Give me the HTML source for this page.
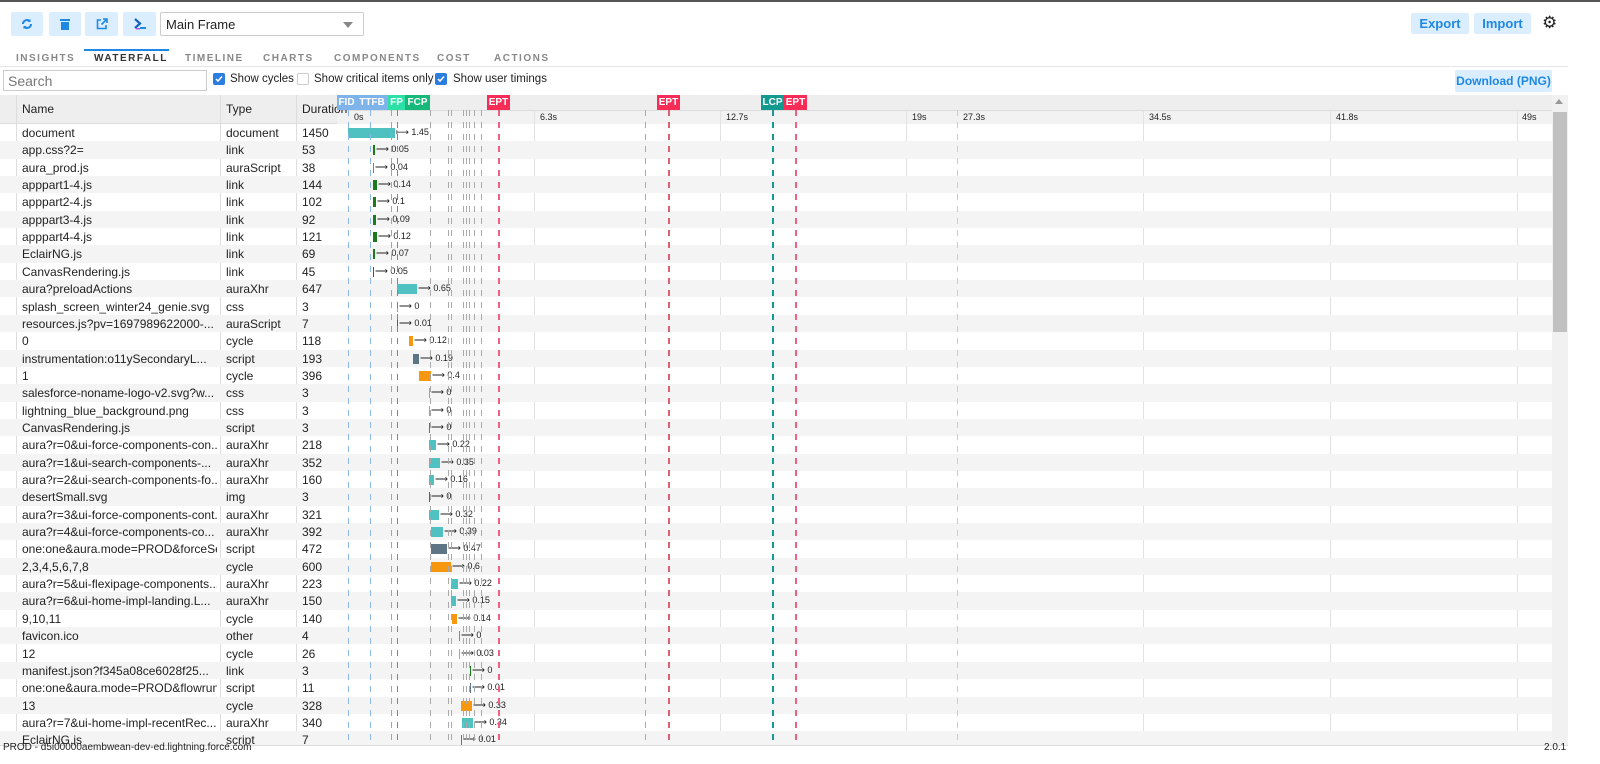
<!DOCTYPE html><html><head><meta charset="utf-8"><style>
*{box-sizing:border-box;margin:0;padding:0}
body{width:1600px;height:764px;overflow:hidden;background:#fff;font-family:"Liberation Sans",Arial,sans-serif;font-size:12px;color:#222;position:relative}
.a{position:absolute}
.btn{position:absolute;top:12px;height:24px;background:#dbeeff;border-radius:2px;display:flex;align-items:center;justify-content:center;color:#1e88e5}
.tab{position:absolute;top:53px;font-size:10px;letter-spacing:1.5px;color:#888;font-weight:bold}
.row{position:absolute;left:0;width:1552px;height:17.35px}
.row.o{background:#f4f4f4}
.c{position:absolute;top:2px;white-space:nowrap;overflow:hidden}
.n{left:22px;width:195px}.t{left:226px}.d{left:302px}
.b{position:absolute;top:4px;height:10px}
.l{position:absolute;top:3px;font-size:9px;white-space:nowrap}
.dl{position:absolute;top:110px;height:635px;width:1px}
.mk{position:absolute;top:95px;height:15px;color:#fff;font-weight:bold;font-size:10px;text-align:center;line-height:15px}
.ax{position:absolute;top:112px;font-size:9px}
.g{position:absolute;top:110px;height:635px;width:1px;background:#e2e2e2}
.cb{position:absolute;top:73px;font-size:11.5px}
</style></head><body>
<div class="a" style="left:0;top:0;width:1600px;height:2px;background:#555"></div>
<div class="btn" style="left:11px;width:32px"><svg width="12" height="12" viewBox="0 0 12 12"><path d="M2 6a4 4 0 0 1 7-2.6M10 6a4 4 0 0 1-7 2.6" stroke="#1e88e5" stroke-width="2" fill="none"/><path d="M9.5 1v3h-3zM2.5 11V8h3z" fill="#1e88e5"/></svg></div>
<div class="btn" style="left:49px;width:32px"><svg width="10" height="12" viewBox="0 0 10 12"><rect x="0" y="1" width="10" height="2" fill="#1e88e5"/><rect x="1" y="4" width="8" height="8" fill="#1e88e5"/></svg></div>
<div class="btn" style="left:85px;width:33px"><svg width="12" height="12" viewBox="0 0 12 12"><path d="M5 2H1.5v8.5H10V7M7 1h4v4M11 1L5.5 6.5" stroke="#1e88e5" stroke-width="1.6" fill="none"/></svg></div>
<div class="btn" style="left:123px;width:33px"><svg width="14" height="12" viewBox="0 0 14 12"><path d="M2 1l5 4.5L2 10" stroke="#1565c0" stroke-width="2.2" fill="none"/><rect x="7" y="9" width="6" height="2" fill="#1e88e5"/><rect x="3" y="10" width="4" height="1.5" fill="#b05cd8"/></svg></div>
<div class="a" style="left:160px;top:12px;width:204px;height:24px;border:1px solid #ccc;border-radius:2px;font-size:13px;padding:4px 5px">Main Frame<span class="a" style="left:182px;top:9px;border-left:5px solid transparent;border-right:5px solid transparent;border-top:6px solid #888"></span></div>
<div class="btn" style="left:1411px;width:58px;top:13px;height:21px;font-weight:bold;font-size:13px">Export</div>
<div class="btn" style="left:1474px;width:57px;top:13px;height:21px;font-weight:bold;font-size:13px">Import</div>
<div class="a" style="left:1542px;top:14px;font-size:17px;line-height:17px">⚙</div>
<div class="tab" style="left:16px">INSIGHTS</div>
<div class="tab" style="left:94px;color:#333">WATERFALL</div>
<div class="a" style="left:84px;top:49px;width:85px;height:2px;background:#1e88e5"></div>
<div class="tab" style="left:185px">TIMELINE</div>
<div class="tab" style="left:263px">CHARTS</div>
<div class="tab" style="left:334px">COMPONENTS</div>
<div class="tab" style="left:437px">COST</div>
<div class="tab" style="left:494px">ACTIONS</div>
<div class="a" style="left:0;top:66px;width:1568px;height:1px;background:#e6e6e6"></div>
<div class="a" style="left:3px;top:70px;width:204px;height:21px;border:1px solid #ccc;font-size:14px;color:#777;padding:2px 4px">Search</div>
<div class="a" style="left:213px;top:73px;width:12px;height:12px;background:#2b7de0;border-radius:2px"><svg width="12" height="12" viewBox="0 0 12 12" class="a"><path d="M3 6l2 2 4-4.5" stroke="#fff" stroke-width="1.5" fill="none"/></svg></div>
<div class="cb" style="left:230px">Show cycles</div>
<div class="a" style="left:297px;top:73px;width:12px;height:12px;border:1px solid #ccc;border-radius:2px"></div>
<div class="cb" style="left:314px">Show critical items only</div>
<div class="a" style="left:435px;top:73px;width:12px;height:12px;background:#2b7de0;border-radius:2px"><svg width="12" height="12" viewBox="0 0 12 12" class="a"><path d="M3 6l2 2 4-4.5" stroke="#fff" stroke-width="1.5" fill="none"/></svg></div>
<div class="cb" style="left:453px">Show user timings</div>
<div class="btn" style="left:1455px;top:70px;width:97px;height:22px;font-weight:bold;font-size:12px">Download (PNG)</div>

<div class="a" style="left:0;top:95px;width:1552px;height:29px;background:#eee;border-bottom:1px solid #ddd"></div>
<div class="a" style="left:337px;top:110px;width:1215px;height:14px;background:#f2f2f2;border-top:1px solid #ddd"></div>
<div class="a" style="left:16px;top:95px;width:1px;height:650px;background:#ddd"></div>
<div class="a" style="left:220px;top:95px;width:1px;height:650px;background:#ddd"></div>
<div class="a" style="left:296px;top:95px;width:1px;height:650px;background:#ddd"></div>
<div class="a" style="left:22px;top:102px;font-size:12px">Name</div>
<div class="a" style="left:226px;top:102px;font-size:12px">Type</div>
<div class="a" style="left:302px;top:102px;font-size:12px">Duration</div>

<div class="g" style="left:534px"></div><div class="g" style="left:720px"></div><div class="g" style="left:906px"></div>
<div class="g" style="left:1143px"></div><div class="g" style="left:1330px"></div><div class="g" style="left:1517px"></div>
<div class="ax" style="left:354px">0s</div><div class="ax" style="left:540px">6.3s</div><div class="ax" style="left:726px">12.7s</div><div class="ax" style="left:912px">19s</div>
<div class="ax" style="left:963px">27.3s</div><div class="ax" style="left:1149px">34.5s</div><div class="ax" style="left:1336px">41.8s</div><div class="ax" style="left:1522px">49s</div>

<div id="rows">
<div class="row" style="top:124px"><span class="c n">document</span><span class="c t">document</span><span class="c d">1450</span><i class="b" style="left:348px;width:47px;background:#4fc1c1"></i><span class="l" style="left:396px">⟼ 1.45</span></div>
<div class="row o" style="top:141.35px"><span class="c n">app.css?2=</span><span class="c t">link</span><span class="c d">53</span><i class="b" style="left:373px;width:2px;background:#1b7a1b"></i><span class="l" style="left:376px">⟶ 0.05</span></div>
<div class="row" style="top:158.7px"><span class="c n">aura_prod.js</span><span class="c t">auraScript</span><span class="c d">38</span><i class="b" style="left:373px;width:1px;background:#c8624c"></i><span class="l" style="left:375px">⟶ 0.04</span></div>
<div class="row o" style="top:176.05px"><span class="c n">apppart1-4.js</span><span class="c t">link</span><span class="c d">144</span><i class="b" style="left:373px;width:4px;background:#1b7a1b"></i><span class="l" style="left:378px">⟶ 0.14</span></div>
<div class="row" style="top:193.4px"><span class="c n">apppart2-4.js</span><span class="c t">link</span><span class="c d">102</span><i class="b" style="left:373px;width:3px;background:#1b7a1b"></i><span class="l" style="left:377px">⟶ 0.1</span></div>
<div class="row o" style="top:210.75px"><span class="c n">apppart3-4.js</span><span class="c t">link</span><span class="c d">92</span><i class="b" style="left:373px;width:3px;background:#1b7a1b"></i><span class="l" style="left:377px">⟶ 0.09</span></div>
<div class="row" style="top:228.1px"><span class="c n">apppart4-4.js</span><span class="c t">link</span><span class="c d">121</span><i class="b" style="left:373px;width:4px;background:#1b7a1b"></i><span class="l" style="left:378px">⟶ 0.12</span></div>
<div class="row o" style="top:245.45px"><span class="c n">EclairNG.js</span><span class="c t">link</span><span class="c d">69</span><i class="b" style="left:373px;width:2px;background:#1b7a1b"></i><span class="l" style="left:376px">⟶ 0.07</span></div>
<div class="row" style="top:262.8px"><span class="c n">CanvasRendering.js</span><span class="c t">link</span><span class="c d">45</span><i class="b" style="left:373px;width:1px;background:#1b7a1b"></i><span class="l" style="left:375px">⟶ 0.05</span></div>
<div class="row o" style="top:280.15px"><span class="c n">aura?preloadActions</span><span class="c t">auraXhr</span><span class="c d">647</span><i class="b" style="left:397px;width:20px;background:#4fc1c1"></i><span class="l" style="left:418px">⟶ 0.65</span></div>
<div class="row" style="top:297.5px"><span class="c n">splash_screen_winter24_genie.svg</span><span class="c t">css</span><span class="c d">3</span><i class="b" style="left:397px;width:1px;background:#d4a020"></i><span class="l" style="left:399px">⟶ 0</span></div>
<div class="row o" style="top:314.85px"><span class="c n">resources.js?pv=1697989622000-...</span><span class="c t">auraScript</span><span class="c d">7</span><i class="b" style="left:397px;width:1px;background:#a94040"></i><span class="l" style="left:399px">⟶ 0.01</span></div>
<div class="row" style="top:332.2px"><span class="c n">0</span><span class="c t">cycle</span><span class="c d">118</span><i class="b" style="left:409px;width:4px;background:#f7960f"></i><span class="l" style="left:414px">⟶ 0.12</span></div>
<div class="row o" style="top:349.55px"><span class="c n">instrumentation:o11ySecondaryL...</span><span class="c t">script</span><span class="c d">193</span><i class="b" style="left:413px;width:6px;background:#5d7584"></i><span class="l" style="left:420px">⟶ 0.19</span></div>
<div class="row" style="top:366.9px"><span class="c n">1</span><span class="c t">cycle</span><span class="c d">396</span><i class="b" style="left:419px;width:12px;background:#f7960f"></i><span class="l" style="left:432px">⟶ 0.4</span></div>
<div class="row o" style="top:384.25px"><span class="c n">salesforce-noname-logo-v2.svg?w...</span><span class="c t">css</span><span class="c d">3</span><i class="b" style="left:429px;width:1px;background:#d4a020"></i><span class="l" style="left:431px">⟶ 0</span></div>
<div class="row" style="top:401.6px"><span class="c n">lightning_blue_background.png</span><span class="c t">css</span><span class="c d">3</span><i class="b" style="left:429px;width:1px;background:#d4a020"></i><span class="l" style="left:431px">⟶ 0</span></div>
<div class="row o" style="top:418.95px"><span class="c n">CanvasRendering.js</span><span class="c t">script</span><span class="c d">3</span><i class="b" style="left:429px;width:1px;background:#5d7584"></i><span class="l" style="left:431px">⟶ 0</span></div>
<div class="row" style="top:436.3px"><span class="c n">aura?r=0&amp;ui-force-components-con...</span><span class="c t">auraXhr</span><span class="c d">218</span><i class="b" style="left:429px;width:7px;background:#4fc1c1"></i><span class="l" style="left:437px">⟶ 0.22</span></div>
<div class="row o" style="top:453.65px"><span class="c n">aura?r=1&amp;ui-search-components-...</span><span class="c t">auraXhr</span><span class="c d">352</span><i class="b" style="left:429px;width:11px;background:#4fc1c1"></i><span class="l" style="left:441px">⟶ 0.35</span></div>
<div class="row" style="top:471px"><span class="c n">aura?r=2&amp;ui-search-components-fo...</span><span class="c t">auraXhr</span><span class="c d">160</span><i class="b" style="left:429px;width:5px;background:#4fc1c1"></i><span class="l" style="left:435px">⟶ 0.16</span></div>
<div class="row o" style="top:488.35px"><span class="c n">desertSmall.svg</span><span class="c t">img</span><span class="c d">3</span><i class="b" style="left:429px;width:1px;background:#a94040"></i><span class="l" style="left:431px">⟶ 0</span></div>
<div class="row" style="top:505.7px"><span class="c n">aura?r=3&amp;ui-force-components-cont...</span><span class="c t">auraXhr</span><span class="c d">321</span><i class="b" style="left:429px;width:10px;background:#4fc1c1"></i><span class="l" style="left:440px">⟶ 0.32</span></div>
<div class="row o" style="top:523.05px"><span class="c n">aura?r=4&amp;ui-force-components-co...</span><span class="c t">auraXhr</span><span class="c d">392</span><i class="b" style="left:431px;width:12px;background:#4fc1c1"></i><span class="l" style="left:444px">⟶ 0.39</span></div>
<div class="row" style="top:540.4px"><span class="c n">one:one&amp;aura.mode=PROD&amp;forceSea...</span><span class="c t">script</span><span class="c d">472</span><i class="b" style="left:431px;width:16px;background:#5d7584"></i><span class="l" style="left:448px">⟶ 0.47</span></div>
<div class="row o" style="top:557.75px"><span class="c n">2,3,4,5,6,7,8</span><span class="c t">cycle</span><span class="c d">600</span><i class="b" style="left:431px;width:20px;background:#f7960f"></i><span class="l" style="left:452px">⟶ 0.6</span></div>
<div class="row" style="top:575.1px"><span class="c n">aura?r=5&amp;ui-flexipage-components...</span><span class="c t">auraXhr</span><span class="c d">223</span><i class="b" style="left:451px;width:7px;background:#4fc1c1"></i><span class="l" style="left:459px">⟶ 0.22</span></div>
<div class="row o" style="top:592.45px"><span class="c n">aura?r=6&amp;ui-home-impl-landing.L...</span><span class="c t">auraXhr</span><span class="c d">150</span><i class="b" style="left:451px;width:5px;background:#4fc1c1"></i><span class="l" style="left:457px">⟶ 0.15</span></div>
<div class="row" style="top:609.8px"><span class="c n">9,10,11</span><span class="c t">cycle</span><span class="c d">140</span><i class="b" style="left:452px;width:5px;background:#f7960f"></i><span class="l" style="left:458px">⟶ 0.14</span></div>
<div class="row o" style="top:627.15px"><span class="c n">favicon.ico</span><span class="c t">other</span><span class="c d">4</span><i class="b" style="left:459px;width:1px;background:#888"></i><span class="l" style="left:461px">⟶ 0</span></div>
<div class="row" style="top:644.5px"><span class="c n">12</span><span class="c t">cycle</span><span class="c d">26</span><i class="b" style="left:459px;width:1px;background:#f7960f"></i><span class="l" style="left:461px">⟶ 0.03</span></div>
<div class="row o" style="top:661.85px"><span class="c n">manifest.json?f345a08ce6028f25...</span><span class="c t">link</span><span class="c d">3</span><i class="b" style="left:470px;width:1px;background:#1b7a1b"></i><span class="l" style="left:472px">⟶ 0</span></div>
<div class="row" style="top:679.2px"><span class="c n">one:one&amp;aura.mode=PROD&amp;flowrunt...</span><span class="c t">script</span><span class="c d">11</span><i class="b" style="left:470px;width:1px;background:#5d7584"></i><span class="l" style="left:472px">⟶ 0.01</span></div>
<div class="row o" style="top:696.55px"><span class="c n">13</span><span class="c t">cycle</span><span class="c d">328</span><i class="b" style="left:461px;width:11px;background:#f7960f"></i><span class="l" style="left:473px">⟶ 0.33</span></div>
<div class="row" style="top:713.9px"><span class="c n">aura?r=7&amp;ui-home-impl-recentRec...</span><span class="c t">auraXhr</span><span class="c d">340</span><i class="b" style="left:462px;width:11px;background:#4fc1c1"></i><span class="l" style="left:474px">⟶ 0.34</span></div>
<div class="row o" style="top:731.25px"><span class="c n">EclairNG.js</span><span class="c t">script</span><span class="c d">7</span><i class="b" style="left:461px;width:1px;background:#5d7584"></i><span class="l" style="left:463px">⟶ 0.01</span></div>
</div>

<div class="dl" style="left:348px;background:repeating-linear-gradient(#8bb9ea 0 6px,transparent 6px 12px)"></div>
<div class="dl" style="left:370px;background:repeating-linear-gradient(#8bb9ea 0 6px,transparent 6px 12px)"></div>
<div class="dl" style="left:391px;background:repeating-linear-gradient(#2de0a5 0 6px,transparent 6px 12px)"></div>
<div class="dl" style="left:397px;background:repeating-linear-gradient(#1abc7a 0 6px,transparent 6px 12px)"></div>
<div class="dl" style="left:430px;background:repeating-linear-gradient(#aaa 0 6px,transparent 6px 12px)"></div>
<div class="dl" style="left:448px;background:repeating-linear-gradient(#aaa 0 6px,transparent 6px 12px)"></div>
<div class="dl" style="left:451px;background:repeating-linear-gradient(#aaa 0 6px,transparent 6px 12px)"></div>
<div class="dl" style="left:463px;background:repeating-linear-gradient(#aaa 0 6px,transparent 6px 12px)"></div>
<div class="dl" style="left:466px;background:repeating-linear-gradient(#aaa 0 6px,transparent 6px 12px)"></div>
<div class="dl" style="left:469px;background:repeating-linear-gradient(#aaa 0 6px,transparent 6px 12px)"></div>
<div class="dl" style="left:474px;background:repeating-linear-gradient(#aaa 0 6px,transparent 6px 12px)"></div>
<div class="dl" style="left:481px;background:repeating-linear-gradient(#aaa 0 6px,transparent 6px 12px)"></div>
<div class="dl" style="left:498px;width:2px;background:repeating-linear-gradient(#f06080 0 6px,transparent 6px 12px)"></div>
<div class="dl" style="left:645px;background:repeating-linear-gradient(#aaa 0 6px,transparent 6px 12px)"></div>
<div class="dl" style="left:668px;width:2px;background:repeating-linear-gradient(#e06070 0 6px,transparent 6px 12px)"></div>
<div class="dl" style="left:772px;width:2px;background:repeating-linear-gradient(#179a92 0 6px,transparent 6px 12px)"></div>
<div class="dl" style="left:795px;width:2px;background:repeating-linear-gradient(#f06080 0 6px,transparent 6px 12px)"></div>
<div class="dl" style="left:957px;background:repeating-linear-gradient(#ccc 0 6px,transparent 6px 12px)"></div>

<div class="mk" style="left:337px;width:19px;background:#7fb4ea">FID</div>
<div class="mk" style="left:356px;width:32px;background:#7fb4ea">TTFB</div>
<div class="mk" style="left:388px;width:17px;background:#2de0a5">FP</div>
<div class="mk" style="left:405px;width:25px;background:#16b97a">FCP</div>
<div class="mk" style="left:487px;width:23px;background:#f72d58">EPT</div>
<div class="mk" style="left:657px;width:23px;background:#f72d58">EPT</div>
<div class="mk" style="left:761px;width:23px;background:#129990">LCP</div>
<div class="mk" style="left:784px;width:23px;background:#f72d58">EPT</div>

<div class="a" style="left:1552px;top:95px;width:16px;height:650px;background:#f1f1f1"></div>
<div class="a" style="left:1555px;top:99px;border-left:4px solid transparent;border-right:4px solid transparent;border-bottom:5px solid #999"></div>
<div class="a" style="left:1553px;top:112px;width:14px;height:220px;background:#c1c1c1"></div>
<div class="a" style="left:0;top:745px;width:1568px;height:19px;background:#fff;border-top:1px solid #ddd"></div>
<div class="a" style="left:3px;top:742px;font-size:10px;color:#222">PROD - d5i00000aembwean-dev-ed.lightning.force.com</div>
<div class="a" style="left:1544px;top:742px;font-size:10px">2.0.1</div>
</body></html>
